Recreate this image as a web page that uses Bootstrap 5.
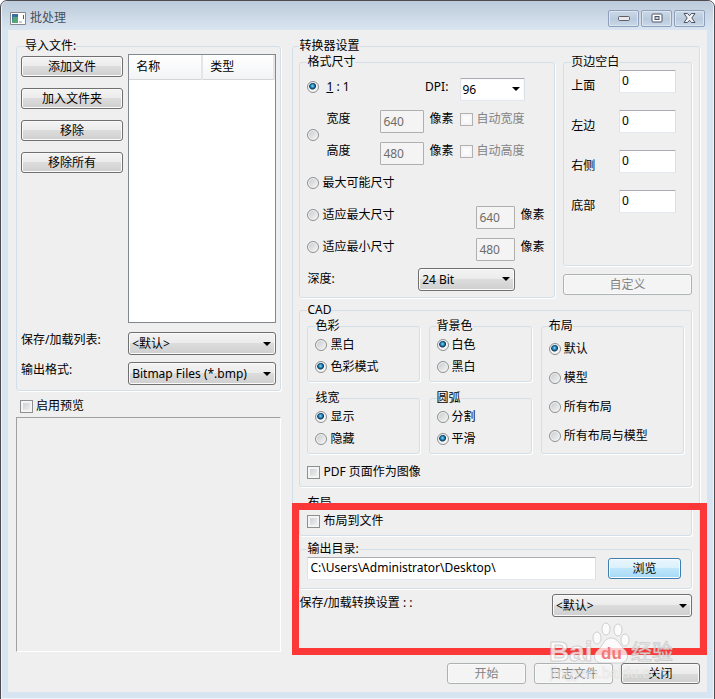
<!DOCTYPE html>
<html lang="zh-CN">
<head>
<meta charset="utf-8">
<meta name="viewport" content="width=device-width, initial-scale=1">
<title>批处理</title>
<link href="https://cdn.jsdelivr.net/npm/bootstrap@5.3.0/dist/css/bootstrap.min.css" rel="stylesheet">
<style>
body{font:12px/16px "Noto Sans","Noto Sans CJK SC",sans-serif;color:#000;background:#fff}
.window{min-height:100vh;background:#d7e4f2;border:1px solid #4f4b4e;border-radius:7px 7px 0 0;box-shadow:inset 0 0 0 1px #eef4fa;padding:0 7px 7px}
.titlebar{height:29px;margin:0 -6px;padding:5px 8px 0 8px;background:linear-gradient(#bccbda,#d9e5f1);border-radius:6px 6px 0 0;color:#45505e}
.tb-set{gap:2px}
.tb-btn{width:31px;height:17px;padding:0;border:1px solid #8f9fbb;border-radius:2px;background:linear-gradient(#cad8e6,#bccddf 50%,#b9cadd 50%,#c9d8e8);box-shadow:inset 0 0 0 1px #dbe6f0;line-height:0}
.client{background:#efefef;padding:8px 7px 8px 8px}
.cols{display:grid;grid-template-columns:265fr 407fr;column-gap:11px}
.size-grid{display:grid;grid-template-columns:256fr 129fr;column-gap:8px}
.cad-grid{display:grid;grid-template-columns:112fr 103fr 143fr;gap:8px 9px}
.grp{border:1px solid #d3dfe8;border-radius:3px;box-shadow:1px 1px 0 #fff;padding:0 7px}
.grp>legend{float:none;width:auto;margin:0;padding:0;font-size:12px;line-height:16px}
.grp-files{padding:0 4px 5px}
.grp-files .stack{padding-top:2px;gap:11px}
.side{display:grid;grid-template-columns:102fr 148fr;column-gap:5px}
.side-list{margin:9px 0 7px}
.btn-win{height:21px;padding:0 4px;font-size:12px;line-height:17px;color:#000;border:1px solid #707070;border-radius:3px;background:linear-gradient(#f3f3f3,#ebebeb 50%,#dcdcdc 50%,#cfcfcf);box-shadow:inset 0 0 0 1px #fafafa}
.btn-win:disabled{color:#838383;border-color:#adb2b5;background:#f4f4f4;opacity:1}
.btn-hot{border-color:#3c7fb1;background:linear-gradient(#eaf6fd,#d9f0fc 50%,#bee6fd 50%,#a7d9f5)}
.w-foot{width:79px}
.sel{appearance:none;height:23px;padding:0 20px 0 3px;font-size:12px;line-height:19px;color:#000;border:1px solid #707070;border-radius:3px;background:url("data:image/svg+xml,%3Csvg xmlns='http://www.w3.org/2000/svg' width='8' height='4'%3E%3Cpath d='M0 0h8L4 4z'/%3E%3C/svg%3E") no-repeat right 4px center,linear-gradient(#f3f3f3,#ebebeb 50%,#dcdcdc 50%,#cfcfcf);box-shadow:inset 0 0 0 1px #fafafa}
.sel-plain{margin-top:4px;border-color:#abadb3 #dbdfe6 #e3e9ef #e2e3ea;border-radius:1px;background-color:#fff;background-image:url("data:image/svg+xml,%3Csvg xmlns='http://www.w3.org/2000/svg' width='8' height='4'%3E%3Cpath d='M0 0h8L4 4z'/%3E%3C/svg%3E");padding-left:1px}
.tb{height:23px;padding:0 2px 2px;font-size:12px;line-height:16px;color:#000;border:1px solid;border-color:#abadb3 #dbdfe6 #e3e9ef #e2e3ea;border-radius:1px;background:#fff;min-width:0}
.tb:disabled{color:#6d6d6d;border-color:#afafaf;background:#f4f4f4;padding-bottom:0}
.rd{appearance:none;flex:none;width:12px;height:12px;margin:0;border:1px solid #8e8f8f;border-radius:50%;background:linear-gradient(135deg,#c6cace,#f6f6f6);box-shadow:inset 0 0 0 1px #f4f4f4}
.rd:checked{background:radial-gradient(circle at 45% 40%,#8fd8f5 0,#1b78ac 2px,#0c3654 3px,#f4f4f4 4px)}
.ck{appearance:none;flex:none;width:13px;height:13px;margin:0;border:1px solid #8e8f8f;background:linear-gradient(135deg,#c4c9ce,#f6f6f6);box-shadow:inset 0 0 0 2px #f4f4f4}
.ck:disabled{border-color:#b1b1b1;background:#fafafa}
.opt{display:flex;align-items:center;gap:3px}
.muted{color:#838383}
.list-box{border:1px solid #828790;background:#fff;height:269px}
.list-box th{height:24px;font-weight:400;padding:0 7px;background:linear-gradient(#fff,#f3f4f6);border-right:2px solid #e3e5e8;border-bottom:1px solid #d5d5d5}
.list-box th:first-child{width:73px}
.preview-opt{margin:7px 0 0 4px}
.preview{border:1px solid #a0a0a0;border-right-color:#fff;border-bottom-color:#fff;height:235px;margin-top:3px}
.fmt{display:grid;grid-template-columns:19px 54px 80px 1fr;grid-auto-rows:32px;align-items:center;padding:1px 0 2px}
.fmt .tb{margin:4px 2px 0 0}
.fmt .wh{grid-row:2/4}
.fmt .ht{grid-column:2}
.fmt .full{grid-column:1/-1}
.fmt .wide{grid-column:1/4}
.fmt .last{grid-column:4;padding-left:16px}
.w-mid{width:44px}.w-small{width:39px}.w-dpi{width:65px}.w-depth{width:97px;margin-right:32px}.w-pad{width:57px}.w-save{width:140px}.w-browse{width:73px}
.pads{padding:0 15px 35px 7px}
.pad-row{height:40px}
.pad-row label{padding-top:8px}
.cad{margin-top:4px}
.rows2,.rows4{padding-bottom:3px}
.rows2 .opt{height:22px}
.rows4 .opt{height:29px}
.rows4{grid-row:1/3;grid-column:3}
.pdf{padding:10px 0 6px}
.lay-file{margin-top:8px;padding-bottom:6px}
.lay-file .opt{padding-top:2px}
.outdir{margin-top:5px;padding-bottom:8px}
.outdir .btn-win{margin:0 3px 0 12px}
.save-row{margin-top:5px}
.save-row label{padding-bottom:6px}
.grp-main{padding:0 7px 33px 6px}
.foot{padding-top:11px}
.callout{position:absolute;left:291px;right:7px;top:502px;height:152px;border:7px solid #fc3737;pointer-events:none}
.wm{position:absolute;right:30px;top:617px;pointer-events:none}
</style>
<script src="https://cdn.jsdelivr.net/npm/bootstrap@5.3.0/dist/js/bootstrap.bundle.min.js"></script>
</head>
<body>
<div class="window position-relative">
  <header class="titlebar d-flex align-items-center">
    <svg width="16" height="13" viewBox="0 0 16 13" aria-hidden="true"><path d="M.5.5h15v12H.5z" fill="#fff" stroke="#85898e"/><path d="M2 2h6v9H2z" fill="#3d6ea0"/><path d="M3 5h5v6H2z" fill="#57a678"/><path d="M9 9h3v2H9z" fill="#ccc"/><path d="M13 3h1v4h-1z" fill="#2d62b0"/></svg>
    <span class="ms-1 flex-grow-1">批处理</span>
    <div class="tb-set d-flex">
      <button class="tb-btn" aria-label="最小化"><svg width="12" height="5"><rect x=".5" y=".5" width="11" height="4" rx="1" fill="#e8e8e8" stroke="#5b5f6c"/></svg></button>
      <button class="tb-btn" aria-label="最大化"><svg width="12" height="10"><rect x="1" y="1" width="10" height="8" rx="1" fill="#fff" stroke="#4d5266"/><rect x="4" y="3.500" width="4" height="3" fill="#c5d3e1" stroke="#4d5266"/></svg></button>
      <button class="tb-btn" aria-label="关闭"><svg width="13" height="10" viewBox="0 0 13 10"><path d="M1 .5h3.500l2 2.200 2-2.200H12L8.800 5 12 9.500H8.500l-2-2.200-2 2.200H1L4.200 5z" fill="#f4f4f4" stroke="#4d5266"/></svg></button>
    </div>
  </header>

  <main class="client">
    <div class="cols">
      <section>
        <fieldset class="grp grp-files">
          <legend class="ms-1">导入文件:</legend>
          <div class="side">
            <div class="stack d-flex flex-column">
              <button class="btn-win">添加文件</button>
              <button class="btn-win">加入文件夹</button>
              <button class="btn-win">移除</button>
              <button class="btn-win">移除所有</button>
            </div>
            <div class="list-box">
              <table class="w-100"><thead><tr><th>名称</th><th>类型</th></tr></thead></table>
            </div>
          </div>
          <div class="side side-list">
            <label for="list">保存/加载列表:</label>
            <select id="list" class="sel"><option>&lt;默认&gt;</option></select>
          </div>
          <div class="side">
            <label for="outfmt">输出格式:</label>
            <select id="outfmt" class="sel"><option>Bitmap Files (*.bmp)</option></select>
          </div>
        </fieldset>
        <label class="opt preview-opt"><input type="checkbox" class="ck">启用预览</label>
        <div class="preview"></div>
      </section>

      <section>
        <fieldset class="grp grp-main">
          <legend>转换器设置</legend>
          <div class="size-grid">
            <fieldset class="grp">
              <legend>格式尺寸</legend>
              <div class="fmt">
                <input type="radio" name="size" id="s1" class="rd" checked>
                <label for="s1"><u>1</u> : 1</label>
                <label for="dpi" class="text-end pe-2 me-1">DPI:</label>
                <select id="dpi" class="sel sel-plain w-dpi"><option>96</option></select>
                <input type="radio" name="size" class="rd wh" aria-label="宽度和高度">
                <label for="wd">宽度</label>
                <span class="opt"><input id="wd" class="tb w-mid" value="640" disabled>像素</span>
                <label class="opt muted"><input type="checkbox" class="ck" disabled>自动宽度</label>
                <label for="ht" class="ht">高度</label>
                <span class="opt"><input id="ht" class="tb w-mid" value="480" disabled>像素</span>
                <label class="opt muted"><input type="checkbox" class="ck" disabled>自动高度</label>
                <label class="opt full"><input type="radio" name="size" class="rd">最大可能尺寸</label>
                <label class="opt wide"><input type="radio" name="size" class="rd">适应最大尺寸</label>
                <span class="opt last"><input class="tb w-small" value="640" aria-label="最大尺寸" disabled>像素</span>
                <label class="opt wide"><input type="radio" name="size" class="rd">适应最小尺寸</label>
                <span class="opt last"><input class="tb w-small" value="480" aria-label="最小尺寸" disabled>像素</span>
                <div class="full d-flex align-items-center justify-content-between">
                  <label for="depth">深度:</label>
                  <select id="depth" class="sel w-depth"><option>24 Bit</option></select>
                </div>
              </div>
            </fieldset>
            <div>
              <fieldset class="grp pads">
                <legend>页边空白</legend>
                <div class="pad-row d-flex justify-content-between"><label for="p1">上面</label><input id="p1" class="tb w-pad" value="0"></div>
                <div class="pad-row d-flex justify-content-between"><label for="p2">左边</label><input id="p2" class="tb w-pad" value="0"></div>
                <div class="pad-row d-flex justify-content-between"><label for="p3">右侧</label><input id="p3" class="tb w-pad" value="0"></div>
                <div class="pad-row d-flex justify-content-between"><label for="p4">底部</label><input id="p4" class="tb w-pad" value="0"></div>
              </fieldset>
              <button class="btn-win w-100 mt-2" disabled>自定义</button>
            </div>
          </div>

          <fieldset class="grp cad">
            <legend>CAD</legend>
            <div class="cad-grid">
              <fieldset class="grp rows2">
                <legend>色彩</legend>
                <label class="opt"><input type="radio" name="col" class="rd">黑白</label>
                <label class="opt"><input type="radio" name="col" class="rd" checked>色彩模式</label>
              </fieldset>
              <fieldset class="grp rows2">
                <legend>背景色</legend>
                <label class="opt"><input type="radio" name="bg" class="rd" checked>白色</label>
                <label class="opt"><input type="radio" name="bg" class="rd">黑白</label>
              </fieldset>
              <fieldset class="grp rows4">
                <legend>布局</legend>
                <label class="opt"><input type="radio" name="lay" class="rd" checked>默认</label>
                <label class="opt"><input type="radio" name="lay" class="rd">模型</label>
                <label class="opt"><input type="radio" name="lay" class="rd">所有布局</label>
                <label class="opt"><input type="radio" name="lay" class="rd">所有布局与模型</label>
              </fieldset>
              <fieldset class="grp rows2">
                <legend>线宽</legend>
                <label class="opt"><input type="radio" name="lw" class="rd" checked>显示</label>
                <label class="opt"><input type="radio" name="lw" class="rd">隐藏</label>
              </fieldset>
              <fieldset class="grp rows2">
                <legend>圆弧</legend>
                <label class="opt"><input type="radio" name="arc" class="rd">分割</label>
                <label class="opt"><input type="radio" name="arc" class="rd" checked>平滑</label>
              </fieldset>
            </div>
            <label class="opt pdf"><input type="checkbox" class="ck">PDF 页面作为图像</label>
          </fieldset>

          <fieldset class="grp lay-file">
            <legend>布局</legend>
            <label class="opt"><input type="checkbox" class="ck">布局到文件</label>
          </fieldset>

          <fieldset class="grp outdir">
            <legend>输出目录:</legend>
            <div class="d-flex align-items-center">
              <input class="tb flex-grow-1" value="C:\Users\Administrator\Desktop\" aria-label="输出目录">
              <button class="btn-win btn-hot w-browse">浏览</button>
            </div>
          </fieldset>

          <div class="d-flex align-items-center justify-content-between save-row">
            <label for="save">保存/加载转换设置 : :</label>
            <select id="save" class="sel w-save"><option>&lt;默认&gt;</option></select>
          </div>
        </fieldset>
      </section>
    </div>
    <footer class="foot d-flex justify-content-end gap-2">
      <button class="btn-win w-foot" disabled>开始</button>
      <button class="btn-win w-foot" disabled>日志文件</button>
      <button class="btn-win w-foot">关闭</button>
    </footer>
  </main>

  <div class="callout"></div>
  <svg class="wm" width="136" height="66" viewBox="0 0 136 66" aria-hidden="true">
    <g fill="#fff" fill-opacity=".75" stroke="#aaa" stroke-opacity=".5">
      <text x="1" y="43" font-size="28" font-weight="700" font-family="Liberation Sans, sans-serif">Bai</text>
      <ellipse cx="49" cy="20" rx="4" ry="6"/><ellipse cx="58" cy="11" rx="4" ry="6"/><ellipse cx="70" cy="12" rx="4" ry="6"/><ellipse cx="77" cy="22" rx="4" ry="6"/>
      <path d="M63 20c7 0 9 7 13 11 6 5 4 14-4 14H54c-8 0-10-8-4-13 5-4 6-12 13-12z"/>
      <text x="83" y="41" font-size="21" font-family="Noto Sans CJK SC, sans-serif">经验</text>
    </g>
    <text x="53" y="41" font-size="17" font-weight="700" font-family="Liberation Sans, sans-serif" fill="#f47a7a">du</text>
    <text x="2" y="60" font-size="15" font-family="Liberation Sans, sans-serif" fill="#fff" fill-opacity=".65" stroke="#aaa" stroke-opacity=".2">jingyan.baidu.com</text>
  </svg>
</div>
</body>
</html>
